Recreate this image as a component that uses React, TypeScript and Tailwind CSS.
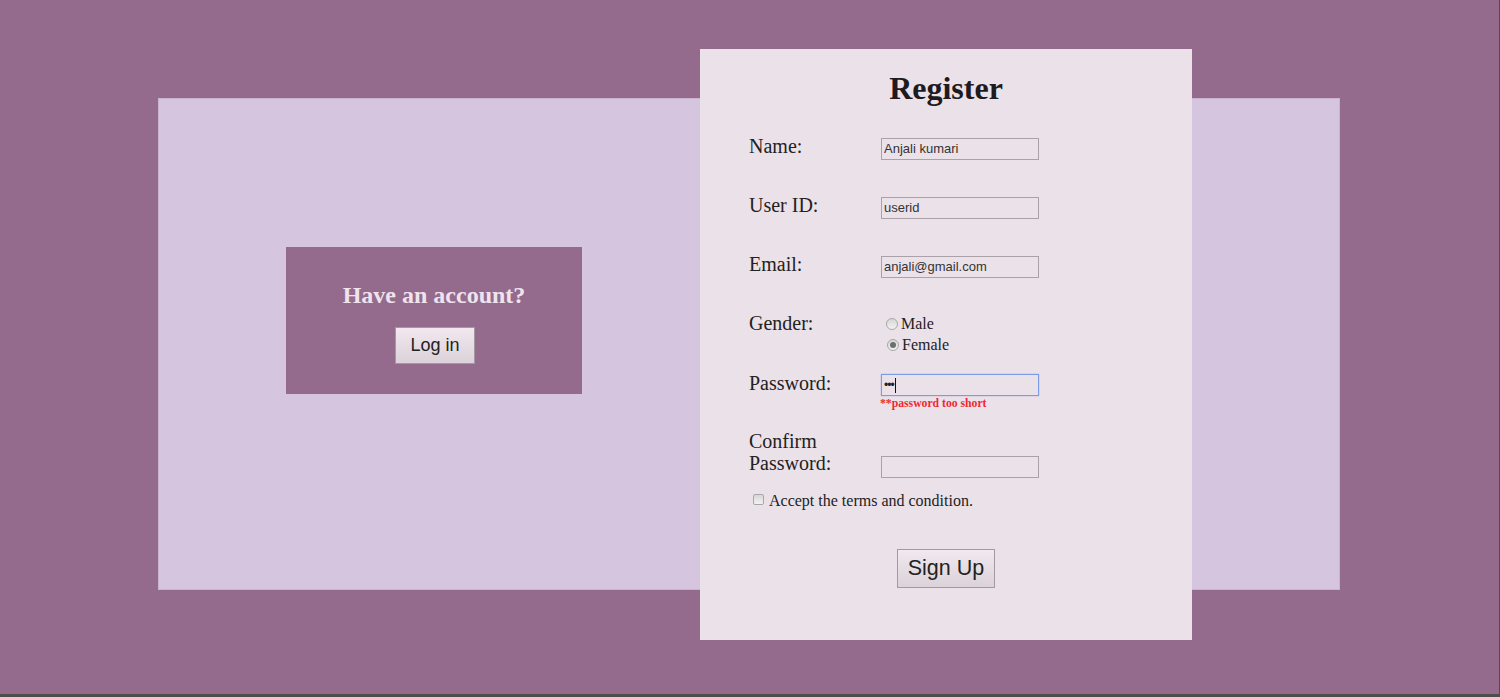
import React from "react";

const serif = { fontFamily: '"Liberation Serif", "Times New Roman", serif' };
const sans = { fontFamily: '"Liberation Sans", Arial, sans-serif' };

function Field({ value }: { value?: string }) {
  return (
    <input
      readOnly
      defaultValue={value ?? ""}
      className="mt-[4px] block h-[22px] w-[158px] border border-[#aba2a9] bg-[#ebe1e9] px-[2px] text-[13px] text-[#333] outline-none"
      style={sans}
    />
  );
}

function Radio({ checked }: { checked?: boolean }) {
  return (
    <span className="flex h-[12px] w-[12px] items-center justify-center rounded-full border border-[#a8a8a8] bg-gradient-to-b from-[#d6d6d6] to-[#f2f2f2]">
      {checked && <span className="h-[6px] w-[6px] rounded-full bg-[#6e6e6e]" />}
    </span>
  );
}

export default function App() {
  return (
    <div className="relative h-[697px] w-[1500px] overflow-hidden bg-[#4d4d4d]" style={serif}>
      <div className="h-[694px] w-[1499px] bg-[#956b8d] pt-[98px] pl-[158px]">
        {/* light panel */}
        <div className="h-[492px] w-[1182px] border border-[#c9b3cf] bg-[#d5c5df] pt-[148px] pl-[127px]">
          <div className="flex h-[147px] w-[296px] flex-col items-center bg-[#956b8d] pt-[34px]">
            <div className="text-[24px] font-bold leading-[28px] text-[#efe3ed]">Have an account?</div>
            <button
              className="ml-[2px] mt-[18px] h-[37px] w-[80px] border border-[#a39aa1] bg-gradient-to-b from-[#f1e9ef] to-[#dcd2da] text-[18px] text-[#222]"
              style={sans}
            >
              Log in
            </button>
          </div>
        </div>
      </div>

      {/* register card overlapping the panel */}
      <div className="absolute left-[700px] top-[49px] h-[591px] w-[492px] bg-[#ebe1e9] pt-[23px] text-[#222]">
        <h1 className="text-center text-[32px] font-bold leading-[32px] text-[#1e1a1d]">Register</h1>

        <div className="pl-[49px] pt-[30px] text-[20px] leading-[24px]">
          <div className="flex">
            <div className="w-[132px]">Name:</div>
            <Field value="Anjali kumari" />
          </div>
          <div className="mt-[33px] flex">
            <div className="w-[132px]">User ID:</div>
            <Field value="userid" />
          </div>
          <div className="mt-[33px] flex">
            <div className="w-[132px]">Email:</div>
            <Field value="anjali@gmail.com" />
          </div>

          <div className="mt-[33px] flex">
            <div className="w-[137px]">Gender:</div>
            <div className="pt-[3px] text-[16px] leading-[20px]">
              <label className="flex items-center gap-[3px]">
                <Radio />
                <span>Male</span>
              </label>
              <label className="ml-[1px] mt-[1px] flex items-center gap-[3px]">
                <Radio checked />
                <span>Female</span>
              </label>
            </div>
          </div>

          <div className="mt-[16px] flex">
            <div className="w-[132px]">Password:</div>
            <div>
              <div
                className="mt-[3px] flex h-[22px] w-[158px] items-center border border-[#7b9de6] bg-[#ebe1e9] px-[2px] text-[13px] text-[#222] shadow-[0_0_1px_#7b9de6]"
                style={sans}
              >
                <span className="tracking-[-1px] text-[12px]">•••</span>
                <span className="ml-[1px] h-[15px] w-[1px] bg-[#111]" />
              </div>
              <div className="-ml-[1px] mt-[1px] text-[11.7px] font-bold leading-[14px] text-[#f0282e]">**password too short</div>
            </div>
          </div>

          <div className="mt-[19px] flex">
            <div className="w-[132px] leading-[22px]">
              Confirm
              <br />
              Password:
            </div>
            <div className="pt-[26px]">
              <input
                readOnly
                className="block h-[22px] w-[158px] border border-[#aba2a9] bg-[#ebe1e9] px-[2px] text-[13px] outline-none"
                style={sans}
              />
            </div>
          </div>

          <label className="mt-[15px] flex items-start text-[16px] leading-[20px]">
            <span className="ml-[4px] mt-[1px] h-[11px] w-[11px] rounded-[2px] border border-[#a8a8a8] bg-gradient-to-b from-[#d6d6d6] to-[#f2f2f2]" />
            <span className="ml-[5px] -mt-[2px]">Accept the terms and condition.</span>
          </label>
        </div>

        <div className="mt-[38px] flex justify-center">
          <button
            className="h-[39px] w-[98px] border border-[#a39aa1] bg-gradient-to-b from-[#f1e9ef] to-[#dcd2da] text-[21.5px] text-[#222]"
            style={sans}
          >
            Sign Up
          </button>
        </div>
      </div>
    </div>
  );
}
